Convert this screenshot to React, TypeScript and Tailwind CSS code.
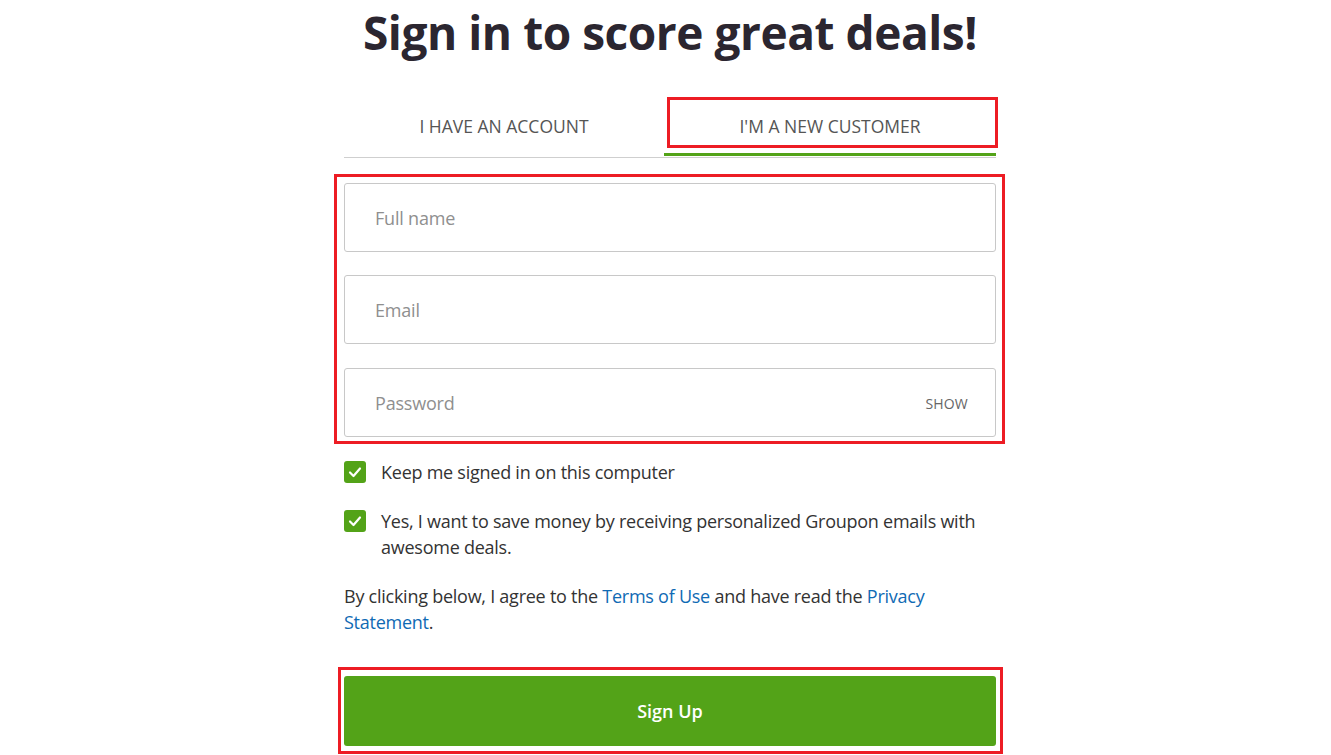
import React from "react";

function Check() {
  return (
    <div className="w-[22px] h-[22px] rounded-[3px] bg-[#53a318] flex items-center justify-center shrink-0">
      <svg width="14" height="12" viewBox="0 0 14 12" fill="none">
        <path d="M2 6.5 L5.5 10 L12 2.5" stroke="white" strokeWidth="2.2" strokeLinecap="round" strokeLinejoin="round" />
      </svg>
    </div>
  );
}

function Field({ placeholder, right }: { placeholder: string; right?: string }) {
  return (
    <div className="h-[69px] border border-[#c8c8c8] rounded-[3px] flex items-center justify-between pl-[30px] pr-[27px] pt-[2px] bg-white">
      <span className="text-[18px] text-[#8f8f8f] tracking-[-0.2px]">{placeholder}</span>
      {right && <span className="text-[14px] text-[#666] tracking-[0.2px]">{right}</span>}
    </div>
  );
}

export default function App() {
  return (
    <div className="min-h-[755px] bg-white" style={{ fontFamily: '"Open Sans", "Liberation Sans", sans-serif' }}>
      <div className="w-[652px] ml-[344px] flex flex-col">
        <h1 className="mt-[4px] text-[46px] leading-[56px] font-bold text-[#2b2630] text-center whitespace-nowrap tracking-[-0.45px]">
          Sign in to score great deals!
        </h1>

        <div className="mt-[37px] flex border-b border-[#cfcfcf]">
          <div className="w-[320px] h-[60px] flex items-center justify-center pb-[2px] text-[17.5px] text-[#555]">
            I HAVE AN ACCOUNT
          </div>
          <div className="relative w-[332px] h-[60px] flex flex-col">
            <div className="flex-1 flex items-center justify-center pt-[2px] text-[17.5px] text-[#555]">
              I'M A NEW CUSTOMER
            </div>
            <div className="h-[3px] bg-[#53a318] mb-[1px]" />
            <div className="absolute left-[3px] top-0 w-[331px] h-[51px] border-[3px] border-[#ed1c24]" />
          </div>
        </div>

        <div className="relative mt-[25px] flex flex-col">
          <div className="absolute left-[-10px] top-[-9px] w-[671px] h-[270px] border-[3px] border-[#ed1c24] pointer-events-none" />
          <Field placeholder="Full name" />
          <div className="mt-[23px]">
            <Field placeholder="Email" />
          </div>
          <div className="mt-[24px]">
            <Field placeholder="Password" right="SHOW" />
          </div>
        </div>

        <div className="mt-[22px] flex items-start gap-[15px]">
          <div className="mt-[2px]">
            <Check />
          </div>
          <span className="text-[18px] leading-[26px] text-[#333] tracking-[-0.25px]">Keep me signed in on this computer</span>
        </div>

        <div className="mt-[23px] flex items-start gap-[15px]">
          <div className="mt-[2px]">
            <Check />
          </div>
          <span className="text-[18px] leading-[26px] text-[#333] tracking-[-0.25px]">
            Yes, I want to save money by receiving personalized Groupon emails with awesome deals.
          </span>
        </div>

        <p className="mt-[23px] text-[18px] leading-[26px] text-[#333] tracking-[-0.25px]">
          By clicking below, I agree to the <a className="text-[#0f6ab4]">Terms of Use</a> and have read the{" "}
          <a className="text-[#0f6ab4]">Privacy Statement</a>.
        </p>

        <div className="relative mt-[41px]">
          <div className="absolute left-[-6px] top-[-9px] w-[665px] h-[87px] border-[3px] border-[#ed1c24] pointer-events-none" />
          <div className="h-[70px] rounded-[3px] bg-[#53a318] flex items-center justify-center text-white text-[18px] font-semibold">
            Sign Up
          </div>
        </div>
      </div>
    </div>
  );
}
